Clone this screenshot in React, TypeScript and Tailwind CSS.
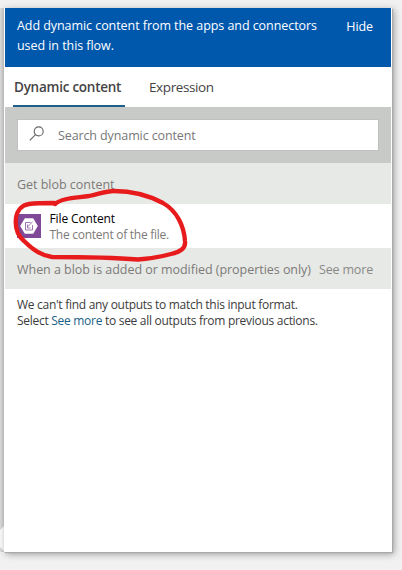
function BlobIcon() {
  return (
    <svg className="block h-6 w-6 shrink-0" viewBox="0 0 24 24">
      <rect width="24" height="24" fill="#804998" />
      <path d="M7.8 4.2h8.4L20.8 12l-4.6 7.8H7.8L3.2 12z" fill="#fff" />
      <path d="M13.500 8.500h-5v7.500h7v-5M10.500 14h3M11 12.300l4.600-4.500M10.500 10.500v3.500" fill="none" stroke="#804998" strokeOpacity="0.75" strokeWidth="1" />
    </svg>
  );
}

function SearchIcon() {
  return (
    <svg className="ml-[11px] mt-[-2px] block h-4 w-4 shrink-0" viewBox="0 0 16 16" fill="none" stroke="#666" strokeWidth="1.1">
      <circle cx="9.7" cy="5.4" r="4.5" />
      <path d="M6.5 8.7.8 14.4" />
    </svg>
  );
}

function HandDrawnCircle() {
  return (
    <svg className="pointer-events-none absolute left-0 top-0 h-[570px] w-[402px]" viewBox="0 0 402 570" fill="none" stroke="#e81b1c" strokeWidth="4.3" strokeLinecap="round" strokeLinejoin="round">
      <path d="M55 204C62 198 75 198 89 196C99 194 106 191 114 191C130 191 148 195 163 203C177 211 184 226 185 241C186 248 180 252 171 254C160 257 150 259 138 259.500C120 258 101 257 52 257C43 256 32 249 24 241C17 235 15 226 16 218C17 210 22 205 29 204C37 203 45 203 54 203" />
    </svg>
  );
}

export default function App() {
  return (
    <div className="relative h-[570px] w-[402px] overflow-hidden bg-[#f1f1f1] pt-2 font-['Open_Sans','Noto_Sans',sans-serif]">
      <div className="absolute left-0 top-2 h-[544px] w-1 bg-linear-to-r from-[#dcdcdc] to-[#c4c4c4]" />
      <svg className="absolute left-0 top-[526px] h-[26px] w-1" viewBox="0 0 4 26">
        <path d="M4 0 0 4v17l4 4z" fill="#fbfbfb" />
      </svg>
      <main className="relative ml-1 h-[544px] w-[388px] bg-white px-px shadow-[1px_1px_1px_#aaa,2px_2px_7px_#999]">
        <header className="flex h-[59px] justify-between bg-[#0058ad] pl-3 pr-[18px] pt-2 text-[12.5px] leading-5 text-white">
          <p className="whitespace-nowrap tracking-[-0.06px]">
            Add dynamic content from the apps and connectors
            <br />
            used in this flow.
          </p>
          <button className="h-5 pt-px tracking-[-0.1px]">Hide</button>
        </header>
        <nav className="flex h-10 pl-2 text-[13.5px] leading-5 text-[#444]">
          <button className="w-28 whitespace-nowrap border-b-2 border-[#205f87] pl-px pt-0.5 text-left font-semibold tracking-[-0.25px]">Dynamic content</button>
          <button className="ml-6 pt-0 tracking-[-0.4px]">Expression</button>
        </nav>
        <div className="h-14 bg-[#c8cac7] px-3 pt-3">
          <div className="flex h-8 w-[362px] items-center border border-[#bfc0bf] bg-white text-[12.5px] text-[#777]">
            <SearchIcon />
            <span className="ml-[13px] pt-0.5 tracking-[-0.11px]">Search dynamic content</span>
          </div>
        </div>
        <h2 className="h-[41px] bg-[#e7e9e6] pl-3 pt-3 text-[12.5px] leading-5 tracking-[-0.02px] text-[#7d7a78]">Get blob content</h2>
        <div className="flex h-11 items-center pl-3">
          <BlobIcon />
          <div className="ml-[8.5px] pt-0.5 text-[12px] leading-4">
            <div className="font-medium tracking-[-0.12px] text-black">File Content</div>
            <div className="tracking-[-0.265px] text-[#7d7a78]">The content of the file.</div>
          </div>
        </div>
        <h2 className="flex h-[41px] justify-between bg-[#e7e9e6] pl-3 pr-[18px] pt-3 text-[12.5px] leading-5 text-[#7d7a78]">
          <span className="whitespace-nowrap tracking-[-0.04px]">When a blob is added or modified (properties only)</span>
          <a className="whitespace-nowrap tracking-[-0.17px] text-[#8a8886]">See more</a>
        </h2>
        <p className="whitespace-nowrap pl-3 pt-2 text-[12px] leading-4 tracking-[-0.285px] text-[#3b3b3b]">
          We can't find any outputs to match this input format.
          <br />
          Select <a className="text-[#205f87]">See more</a> to see all outputs from previous actions.
        </p>
      </main>
      <HandDrawnCircle />
    </div>
  );
}
